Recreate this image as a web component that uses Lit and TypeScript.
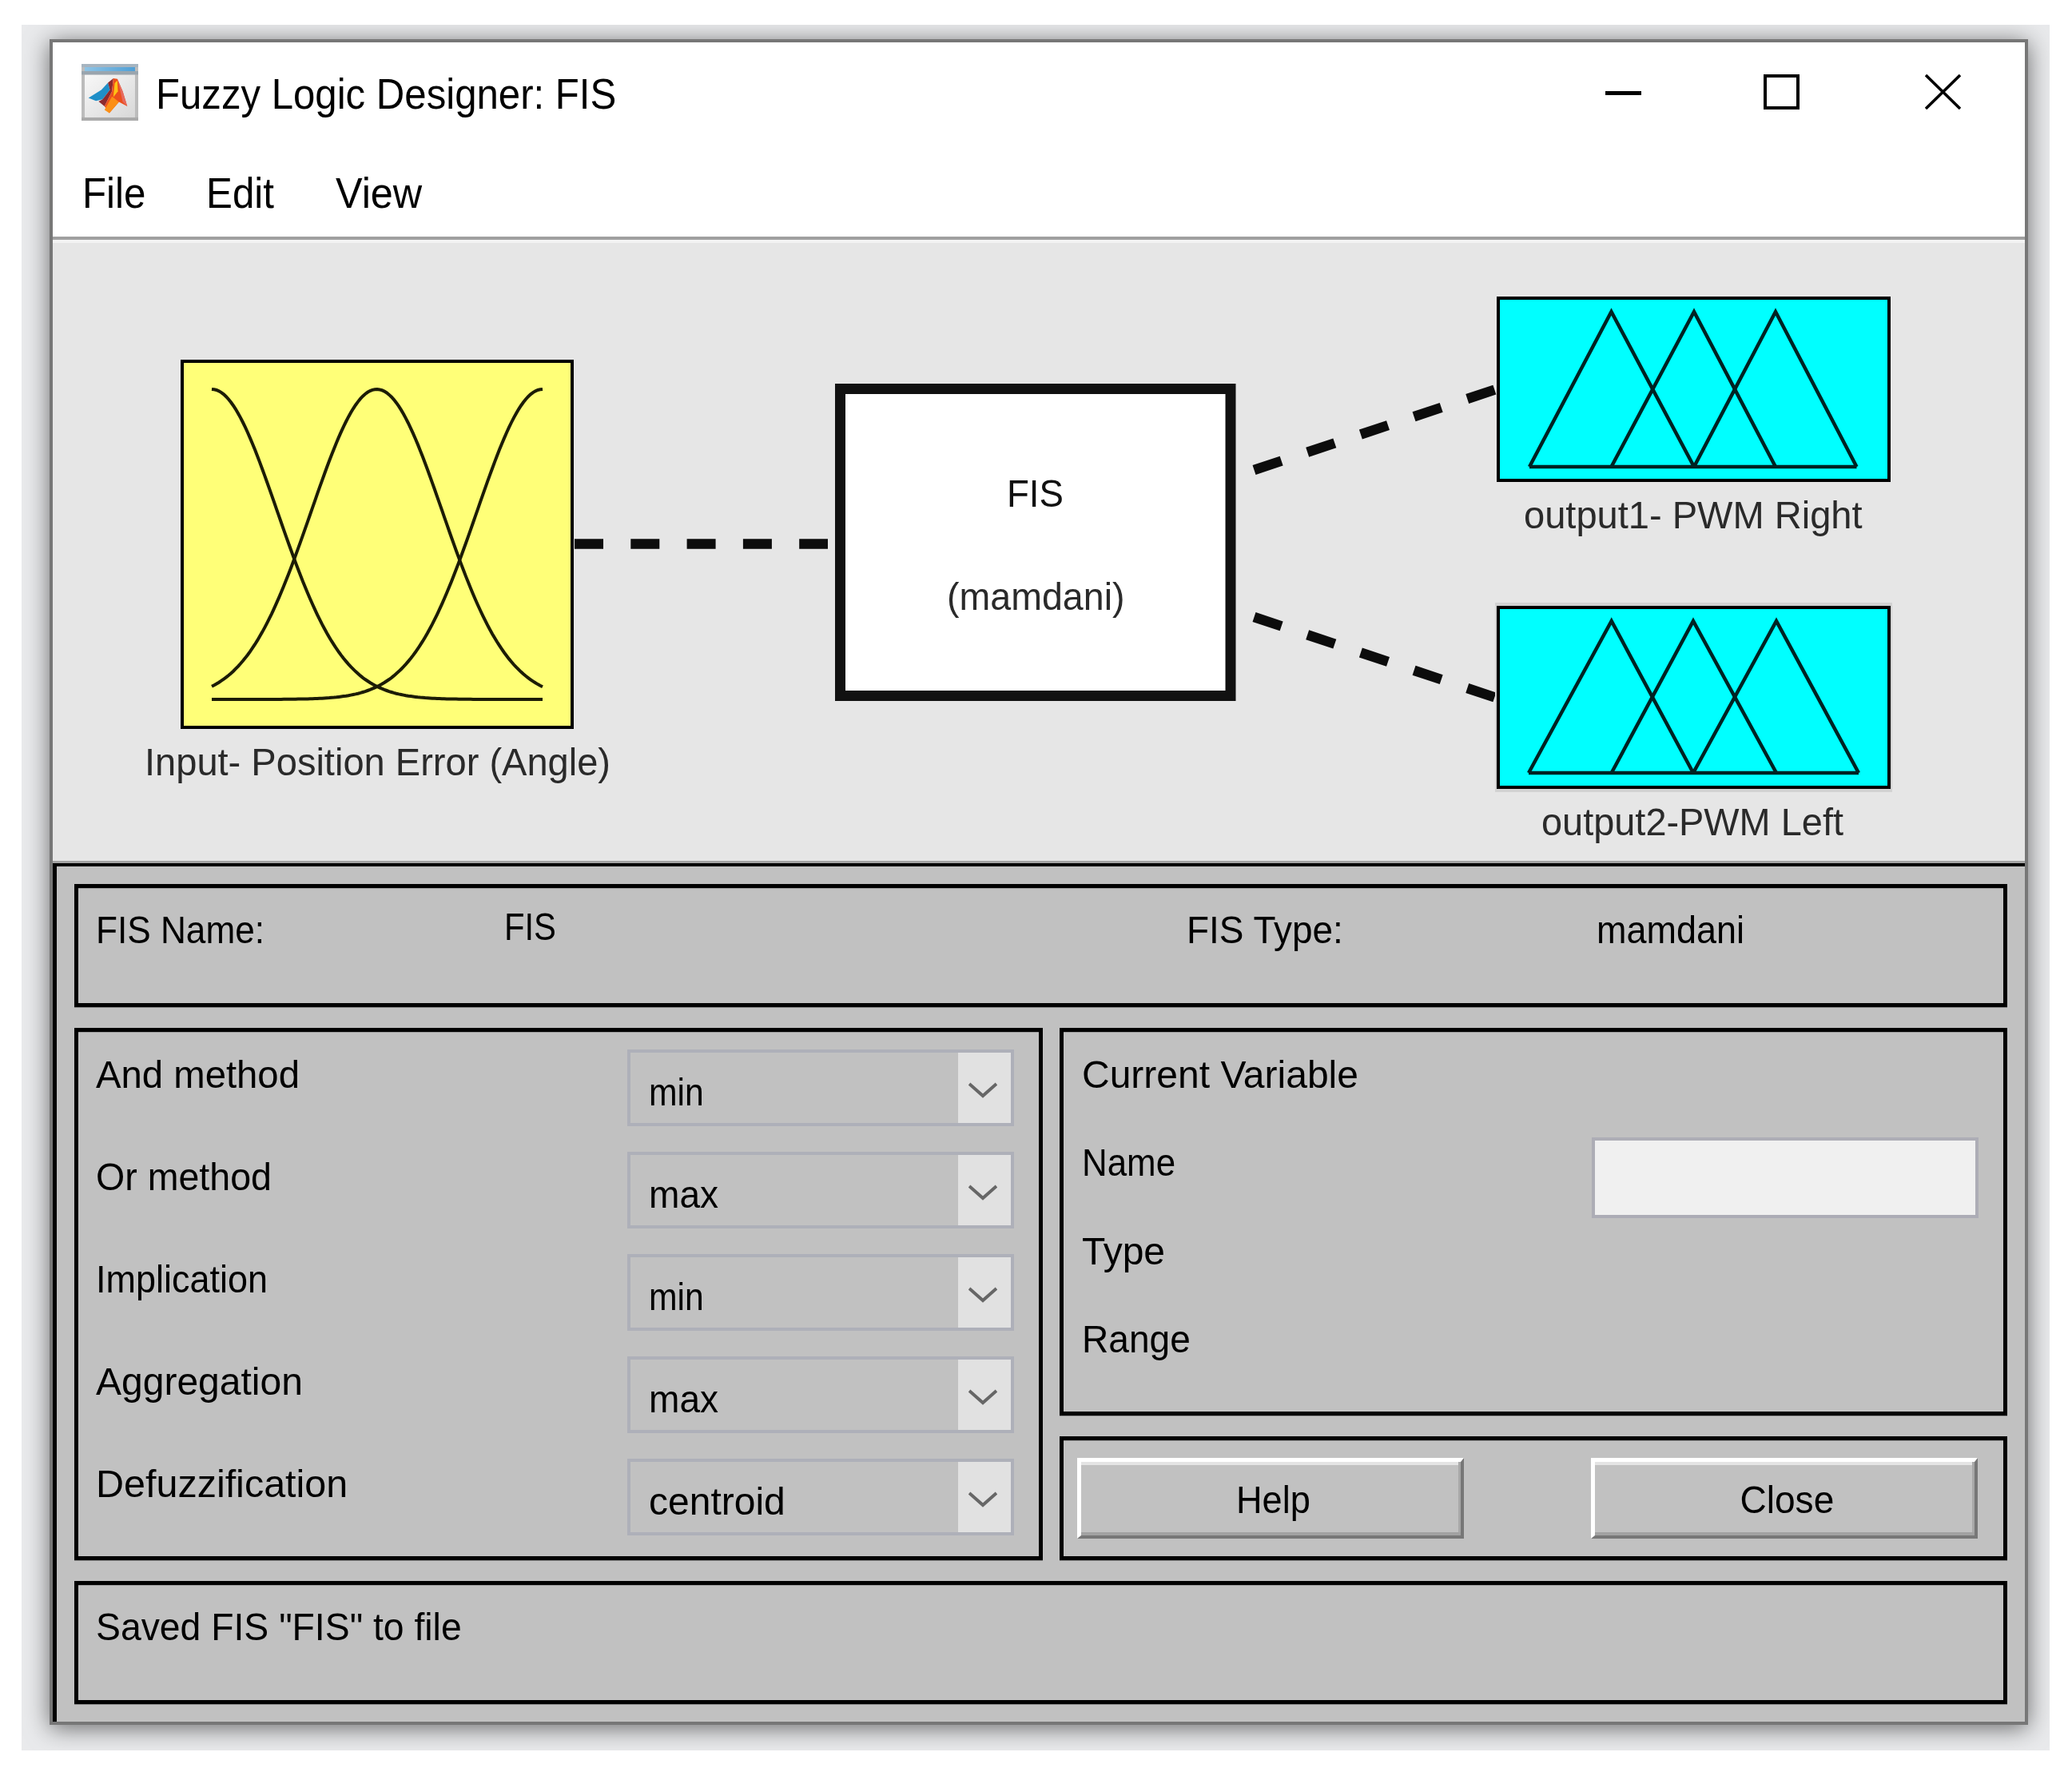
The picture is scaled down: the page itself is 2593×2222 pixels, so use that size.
import { LitElement, html, css, svg } from "lit";
import { customElement } from "lit/decorators.js";

const tx = (s: string, k: number, cls = "") =>
  html`<span class="t ${cls}" style="--k:${k}">${s}</span>`;

const gauss = (c: number) => {
  const x0 = 265, x1 = 679, top = 487, base = 875, sigma = 82;
  const pts: string[] = [];
  for (let x = x0; x <= x1; x += 3) {
    const v = Math.exp(-((x - c) ** 2) / (2 * sigma * sigma));
    pts.push(`${x},${(base - v * (base - top)).toFixed(1)}`);
  }
  return pts.join(" ");
};

const triangles = (xs: number[], peak: number, base: number) => svg`
  <line class="mf" x1=${xs[0]} y1=${base} x2=${xs[4]} y2=${base}></line>
  ${[0, 1, 2].map(
    (i) => svg`<polyline class="mf" points="${xs[i]},${base} ${xs[i + 1]},${peak} ${xs[i + 2]},${base}"></polyline>`
  )}
`;

const labels = [
  { s: "Input- Position Error (Angle)", k: 0.98, x: 181, b: 970.5, c: "lab" },
  { s: "FIS", k: 0.95, x: 1260, b: 634.5, c: "lab dark" },
  { s: "(mamdani)", k: 0.97, x: 1185, b: 763.5, c: "lab" },
  { s: "output1- PWM Right", k: 0.98, x: 1907, b: 662, c: "lab" },
  { s: "output2-PWM Left", k: 0.977, x: 1929, b: 1045.5, c: "lab" },
];

const methods = [
  ["And method", 0.985, "min", 0.89],
  ["Or method", 0.97, "max", 0.96],
  ["Implication", 0.937, "min", 0.89],
  ["Aggregation", 1, "max", 0.96],
  ["Defuzzification", 1.01, "centroid", 1],
] as const;

@customElement("app-root")
export class AppRoot extends LitElement {
  static styles = css`
    :host {
      display: block;
      width: 2593px;
      height: 2222px;
      background: #fff;
      font-family: "Liberation Sans", Arial, sans-serif;
      font-size: 48px;
      line-height: 48px;
      color: #000;
    }
    * { box-sizing: border-box; }
    .t {
      display: inline-block;
      white-space: nowrap;
      transform-origin: 0 50%;
      transform: scaleX(var(--k, 1));
    }
    .t.mid { transform-origin: 50% 50%; }
    .page { padding: 31px 0 0 27px; }
    .backdrop {
      width: 2538px;
      height: 2159px;
      padding: 18px 27px 32px 35px;
      background: #e9eaec;
      overflow: hidden;
    }
    .window {
      width: 2476px;
      height: 2109px;
      border: 4px solid #777;
      background: #fff;
      display: flex;
      flex-direction: column;
      box-shadow: 0 4px 28px rgba(0, 0, 0, 0.55);
      filter: blur(0.6px);
    }
    .titlebar {
      height: 124px;
      flex: none;
      display: flex;
      align-items: center;
      padding: 0 80px 0 36px;
    }
    .app-icon { width: 71px; height: 71px; flex: none; display: block; }
    .title { font-size: 54px; line-height: 54px; margin: 4px 0 0 22px; }
    .controls { margin-left: auto; display: flex; gap: 155px; }
    .controls svg { display: block; width: 45px; height: 44px; }
    .controls .max { margin: 0 2px 0 -2px; }
    .menu {
      height: 123px;
      flex: none;
      padding: 14px 0 4px 37px;
      border-bottom: 4px solid #a0a0a0;
      display: grid;
      grid-template-columns: 155px 162px 1fr;
      align-items: center;
      font-size: 53px;
      line-height: 53px;
    }
    .diagram {
      position: relative;
      height: 780px;
      flex: none;
      background: #e6e6e6;
      box-shadow: inset 0 4px #f3f3f3, inset 0 -3px #a2a2a2;
    }
    .diagram svg { position: absolute; left: 0; top: 0; width: 2468px; height: 780px; }
    .mf { fill: none; stroke: #022; stroke-width: 4.5; stroke-linejoin: miter; }
    .gauss { fill: none; stroke: #1c1c06; stroke-width: 4; }
    .dash { stroke: #0c0c0c; stroke-width: 12.5; stroke-dasharray: 36 34.3; }
    .box { stroke: #000; stroke-width: 4; }
    .lab { position: absolute; color: #2a2a2a; }
    .lab.dark { color: #111; }
    .panel {
      flex: 1;
      background: #c1c1c1;
      border-top: 4px solid #000;
      border-left: 5px solid #000;
      padding: 22px 22px 22px 22px;
      display: grid;
      grid-template-rows: 154px 666px 154px;
      row-gap: 26px;
    }
    .frame {
      border: 5px solid #000;
      box-shadow: 0 1px #8a8a8a, inset 0 1px #9a9a9a;
      min-width: 0;
    }
    .info {
      display: grid;
      grid-template-columns: 511px 854px 513px 1fr;
      padding: 29px 0 0 22px;
    }
    .lift { margin-top: -4px; }
    .mid-row {
      display: grid;
      grid-template-columns: 1212px 1186px;
      column-gap: 21px;
    }
    .methods {
      display: grid;
      grid-template-columns: 665px 484px;
      grid-auto-rows: 96px;
      row-gap: 32px;
      padding: 22px 0 0 22px;
    }
    .m-label { padding-top: 8px; }
    .dropdown {
      display: flex;
      border: 4px solid #aeb0b9;
    }
    .dropdown .val { flex: 1; padding: 26px 0 0 23px; }
    .arrow {
      width: 66px;
      background: #e1e1e1;
      display: flex;
      align-items: center;
      justify-content: center;
    }
    .arrow svg { display: block; width: 36px; height: 20px; margin: 6px 4px 0 0; }
    .right-col {
      display: grid;
      grid-template-rows: 485px 155px;
      row-gap: 26px;
    }
    .variable {
      display: grid;
      grid-template-columns: 638px 484px;
      grid-auto-rows: 48px;
      row-gap: 62.33px;
      padding: 30px 0 0 23px;
    }
    .variable .span { grid-column: 1 / -1; }
    .variable .r3 { grid-row: 3; }
    .variable .r4 { grid-row: 4; }
    .field {
      grid-column: 2;
      grid-row: 2;
      height: 101px;
      margin-top: -8px;
      background: #f0f0f0;
      border: 4px solid #adadb6;
    }
    .name-label { grid-column: 1; grid-row: 2; }
    .actions {
      display: flex;
      gap: 159px;
      padding: 22px 0 0 17px;
      align-items: flex-start;
    }
    .button {
      width: 484px;
      height: 101px;
      border-style: solid;
      border-width: 5px 4px 4px 5px;
      border-color: #fff #777 #777 #fff;
      box-shadow: inset 0 -4px #a2a2a2, inset -3px 0 #a8a8a8, inset 0 4px #e4e4e4;
      background: #c1c1c1;
      display: flex;
      justify-content: center;
      padding: 24px 0 0 6px;
    }
    .button .t { height: 48px; }
    .status { padding: 29px 0 0 22px; }
  `;

  render() {
    return html`
      <div class="page">
        <div class="backdrop">
          <div class="window">
            <div class="titlebar">
              <svg class="app-icon" viewBox="36 28 212 212">
                <defs>
                  <linearGradient id="pane" x1="0" y1="0" x2="1" y2="1">
                    <stop offset="0" stop-color="#f8f8f8"></stop>
                    <stop offset="1" stop-color="#d8d8d8"></stop>
                  </linearGradient>
                  <linearGradient id="band" x1="0" y1="0" x2="1" y2="0">
                    <stop offset="0" stop-color="#8ec4e6"></stop>
                    <stop offset="1" stop-color="#4f9fd6"></stop>
                  </linearGradient>
                </defs>
                <rect x="36" y="28" width="212" height="212" fill="#bcbcbc"></rect>
                <rect x="48" y="68" width="188" height="160" fill="url(#pane)"></rect>
                <rect x="36" y="28" width="212" height="12" fill="#a6b4c0"></rect>
                <rect x="48" y="40" width="188" height="15" fill="url(#band)"></rect>
                <rect x="36" y="55" width="212" height="13" fill="#9aa5ae"></rect>
                <rect x="36" y="228" width="212" height="12" fill="#aaaaaa"></rect>
                <path d="M62 155 L110 125 L135 98 L142 125 L115 160 L90 166 Z" fill="#1f8fc8"></path>
                <path d="M135 98 L155 82 L150 130 L122 186 L100 168 L115 160 L142 125 Z" fill="#8e2a2e"></path>
                <path d="M155 82 L170 84 L190 130 L207 186 L176 170 L140 212 L122 186 L150 130 Z" fill="#ec4f1c"></path>
                <path d="M160 100 L170 90 L172 130 L155 152 Z" fill="#ffc315"></path>
                <path d="M176 170 L140 212 L122 200 L150 150 Z" fill="#fb8f16"></path>
                <path d="M170 84 L190 130 L207 186 L190 170 L180 125 Z" fill="#e66a5e"></path>
              </svg>
              <div class="title">${tx("Fuzzy Logic Designer: FIS", 0.91)}</div>
              <div class="controls">
                <svg viewBox="0 0 45 44"><rect x="0" y="21" width="45" height="5" fill="#000"></rect></svg>
                <svg class="max" viewBox="0 0 45 44"><rect x="2" y="2" width="41" height="40" fill="none" stroke="#000" stroke-width="4"></rect></svg>
                <svg viewBox="0 0 45 44"><path d="M1 1 L44 43 M44 1 L1 43" fill="none" stroke="#000" stroke-width="3.6"></path></svg>
              </div>
            </div>
            <div class="menu">
              <div>${tx("File", 0.93)}</div>
              <div>${tx("Edit", 0.93)}</div>
              <div>${tx("View", 0.95)}</div>
            </div>
            <div class="diagram">
              <svg viewBox="66 300 2468 780">
                <line class="dash" x1="719" y1="680.5" x2="1036" y2="680.5"></line>
                <line class="dash" x1="1569.5" y1="588" x2="1873" y2="486.7"></line>
                <line class="dash" x1="1569.5" y1="772" x2="1873" y2="873.3"></line>

                <rect class="box" x="228" y="452" width="488" height="458" fill="#ffff78"></rect>
                ${[265, 471.5, 679].map((c) => svg`<polyline class="gauss" points=${gauss(c)}></polyline>`)}

                <rect x="1051.5" y="486.5" width="488.5" height="384" fill="#fff" stroke="#111" stroke-width="13"></rect>

                <rect class="box" x="1875" y="373" width="489" height="228" fill="#00ffff"></rect>
                ${triangles([1914, 2016.5, 2120, 2222, 2323.5], 390, 584)}

                <rect x="1871" y="754" width="497" height="237" fill="#d2d2d2"></rect>
                <rect class="box" x="1875" y="760" width="489" height="225" fill="#00ffff"></rect>
                ${triangles([1913, 2016.7, 2119, 2223, 2326], 777, 967)}
              </svg>
              ${labels.map(
                (l) => html`<div class=${l.c} style="left:${l.x - 66}px;top:${l.b - 40.6 - 300}px">${tx(l.s, l.k)}</div>`
              )}
            </div>
            <div class="panel">
              <div class="frame info">
                <div>${tx("FIS Name:", 0.92)}</div>
                <div class="lift">${tx("FIS", 0.87)}</div>
                <div>${tx("FIS Type:", 0.957)}</div>
                <div>${tx("mamdani", 0.937)}</div>
              </div>
              <div class="mid-row">
                <div class="frame methods">
                  ${methods.map(
                    ([label, k, value, vk]) => html`
                      <div class="m-label">${tx(label, k)}</div>
                      <div class="dropdown">
                        <div class="val">${tx(value, vk)}</div>
                        <div class="arrow">
                          <svg viewBox="0 0 36 20"><path d="M1 2 L18 17 L35 2" fill="none" stroke="#666" stroke-width="4"></path></svg>
                        </div>
                      </div>
                    `
                  )}
                </div>
                <div class="right-col">
                  <div class="frame variable">
                    <div class="span">${tx("Current Variable", 1)}</div>
                    <div class="name-label">${tx("Name", 0.914)}</div>
                    <div class="field"></div>
                    <div class="span r3">${tx("Type", 1)}</div>
                    <div class="span r4">${tx("Range", 0.96)}</div>
                  </div>
                  <div class="frame actions">
                    <div class="button">${tx("Help", 0.94, "mid")}</div>
                    <div class="button">${tx("Close", 0.96, "mid")}</div>
                  </div>
                </div>
              </div>
              <div class="frame status">${tx('Saved FIS "FIS" to file', 0.965)}</div>
            </div>
          </div>
        </div>
      </div>
    `;
  }
}
